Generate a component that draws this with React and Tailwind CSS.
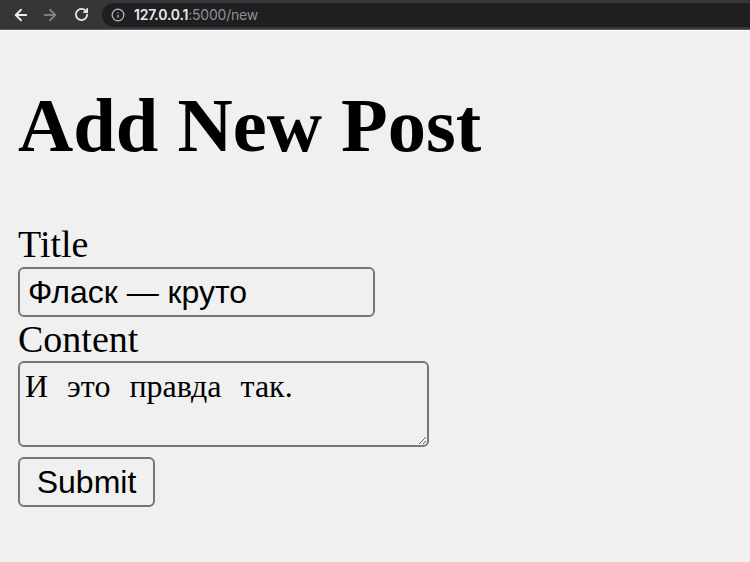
import React from "react";
import { ArrowLeft, ArrowRight, RotateCw, Info } from "lucide-react";

export default function App() {
  return (
    <div className="w-[750px] h-[562px] overflow-hidden bg-[#f0f0f0] flex flex-col">
      <div className="h-[29px] bg-[#353638] flex items-center shrink-0">
        <div className="w-[40px] flex justify-center pl-[1px]">
          <ArrowLeft size={18} strokeWidth={2.5} className="text-[#e8eaed]" />
        </div>
        <div className="w-[20px] flex justify-center">
          <ArrowRight size={18} strokeWidth={2.5} className="text-[#7d7f82]" />
        </div>
        <div className="w-[42px] flex justify-center">
          <RotateCw size={15} strokeWidth={2.8} className="text-[#e8eaed]" />
        </div>
        <div className="flex-1 h-[24px] bg-[#1f1f21] rounded-l-full flex items-center pl-[9px] gap-[9px]" style={{ fontFamily: '"Inter", "Liberation Sans", sans-serif' }}>
          <Info size={14} strokeWidth={2} className="text-[#bdc1c6]" />
          <span className="text-[14px] leading-none tracking-[-0.2px]">
            <span className="text-[#e8eaed] font-semibold">127.0.0.1</span>
            <span className="text-[#8e9196]">:5000/new</span>
          </span>
        </div>
      </div>
      <div className="h-[1px] bg-[#5c5c5e] shrink-0" />
      <div className="h-[1px] bg-[#fafafa] shrink-0" />
      <main className="px-[18px] flex flex-col items-start text-black" style={{ fontFamily: '"Liberation Serif", serif' }}>
        <h1 className="mt-[53px] text-[76.5px] font-bold leading-[84px]">Add New Post</h1>
        <label className="mt-[55px] text-[38px] leading-[42px]">Title</label>
        <input
          className="mt-[2px] w-[357px] h-[50px] border-2 border-[#777777] rounded-[6px] bg-[#f0f0f0] pl-[8px] text-[32px] text-black outline-none"
          style={{ fontFamily: '"Liberation Sans", Arial, sans-serif' }}
          defaultValue="Фласк — круто"
        />
        <label className="mt-[1px] text-[38px] leading-[42px]">Content</label>
        <textarea
          className="mt-[1px] w-[411px] h-[86px] border-2 border-[#777777] rounded-[6px] bg-[#f0f0f0] px-[5px] pt-[5px] text-[32px] leading-[36px] text-black outline-none"
          style={{ fontFamily: '"Liberation Serif", serif', wordSpacing: "11px" }}
          defaultValue="И это правда так."
        />
        <button
          className="mt-[10px] w-[137px] h-[50px] border-2 border-[#777777] rounded-[6px] bg-[#f0f0f0] text-[32px] leading-none text-black"
          style={{ fontFamily: '"Liberation Sans", Arial, sans-serif' }}
        >
          Submit
        </button>
      </main>
    </div>
  );
}
